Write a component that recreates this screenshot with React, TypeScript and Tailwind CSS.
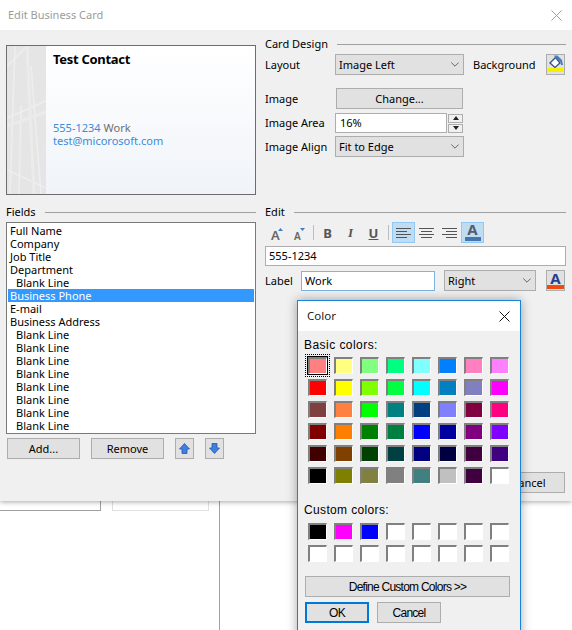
import React from "react";

const basic = [
  ["#ff8080", "#ffff80", "#80ff80", "#00ff80", "#80ffff", "#0080ff", "#ff80c0", "#ff80ff"],
  ["#ff0000", "#ffff00", "#80ff00", "#00ff40", "#00ffff", "#0080c0", "#8080c0", "#ff00ff"],
  ["#804040", "#ff8040", "#00ff00", "#008080", "#004080", "#8080ff", "#800040", "#ff0080"],
  ["#800000", "#ff8000", "#008000", "#008040", "#0000ff", "#0000a0", "#800080", "#8000ff"],
  ["#400000", "#804000", "#004000", "#004040", "#000080", "#000040", "#400040", "#400080"],
  ["#000000", "#808000", "#808040", "#808080", "#408080", "#c0c0c0", "#400040", "#ffffff"],
];
const custom = [
  ["#000000", "#ff00ff", "#0000ff", "#ffffff", "#ffffff", "#ffffff", "#ffffff", "#ffffff"],
  ["#ffffff", "#ffffff", "#ffffff", "#ffffff", "#ffffff", "#ffffff", "#ffffff", "#ffffff"],
];
const fields: [string, boolean?, boolean?][] = [
  ["Full Name"], ["Company"], ["Job Title"], ["Department"], ["Blank Line", true],
  ["Business Phone", false, true], ["E-mail"], ["Business Address"],
  ["Blank Line", true], ["Blank Line", true], ["Blank Line", true], ["Blank Line", true],
  ["Blank Line", true], ["Blank Line", true], ["Blank Line", true], ["Blank Line", true],
];

function Chevron() {
  return (
    <svg width="8" height="5" viewBox="0 0 8 5" className="shrink-0">
      <path d="M0.3 0.5 L4 4.2 L7.7 0.5" fill="none" stroke="#666" strokeWidth="1" />
    </svg>
  );
}
function Select({ text, className }: { text: string; className: string }) {
  return (
    <div className={`flex h-[21px] shrink-0 items-center justify-between border border-[#adadad] bg-[#e1e1e1] pl-[3px] pr-[4px] ${className}`}>
      <span>{text}</span>
      <Chevron />
    </div>
  );
}
function Btn({ children, className }: { children: React.ReactNode; className: string }) {
  return (
    <div className={`flex h-[21px] shrink-0 items-center justify-center border border-[#adadad] bg-[#e1e1e1] ${className}`}>{children}</div>
  );
}
function Heading({ text }: { text: string }) {
  return (
    <div className="flex h-[14px] items-center gap-[9px]">
      <span>{text}</span>
      <div className="h-px flex-1 bg-[#a0a0a0]" />
    </div>
  );
}
function Swatch({ color, selected }: { color: string; selected?: boolean }) {
  return (
    <div className="relative h-[17px] w-[19px] border-t-2 border-l-2 border-r border-b border-t-[#808080] border-l-[#808080] border-r-white border-b-white" style={{ backgroundColor: color }}>
      {selected && (
        <div className="absolute -left-[5px] -top-[5px] h-[23px] w-[25px] border border-dotted border-black p-px">
          <div className="h-full w-full border border-black" />
        </div>
      )}
    </div>
  );
}
function ArrowIcon({ down }: { down?: boolean }) {
  return (
    <svg width="11" height="11" viewBox="0 0 11 11">
      <path d={down ? "M3 0.5H8V5H10.5L5.5 10.5L0.5 5H3Z" : "M3 10.5H8V6H10.5L5.5 0.5L0.5 6H3Z"} fill="#3f7fe0" stroke="#2a55a8" strokeWidth="0.8" />
    </svg>
  );
}
const dlgFont = { fontFamily: '"Liberation Sans", sans-serif' };

export default function App() {
  return (
    <div className="relative h-[630px] w-[572px] overflow-hidden bg-white text-[11px] leading-[14px] text-black" style={{ fontFamily: '"Noto Sans", "Open Sans", sans-serif' }}>
      <div className="relative z-10 h-[501px] bg-[#f0f0f0] shadow-[0_1px_5px_rgba(0,0,0,0.35)]">
        <div className="flex h-[30px] items-center justify-between bg-white pl-2 pr-[10px] text-[#9b9b9b]">
          <span>Edit Business Card</span>
          <svg width="11" height="11" viewBox="0 0 11 11">
            <path d="M0.5 0.5L10.5 10.5M10.5 0.5L0.5 10.5" stroke="#a0a0a0" strokeWidth="1" fill="none" />
          </svg>
        </div>
        <div className="grid grid-cols-[250px_301px] gap-x-[9px] pl-[6px] pt-[15px]">
          <div className="relative flex h-[150px] overflow-hidden border border-[#6d6d6d] bg-gradient-to-b from-white to-[#f0f4f9] pl-[39px]">
            <svg className="absolute left-0 top-0 h-full w-[39px]" viewBox="0 0 39 148" preserveAspectRatio="none">
              <rect width="39" height="148" fill="#e5e5e5" />
              <path d="M0 72L39 55M0 124L39 142M8 0L3 148M24 20L34 148M0 20L20 0M14 60L12 148" stroke="#eeeeee" strokeWidth="1.5" fill="none" />
              <path d="M0 80L39 66M20 0L27 148" stroke="#ebebeb" strokeWidth="3" fill="none" />
            </svg>
            <div className="flex flex-col pl-[7px] pt-[6px]">
              <div className="text-[13px] font-bold leading-[15px] tracking-[-0.3px]">Test Contact</div>
              <div className="mt-[54px] flex gap-[3px] leading-[13px]">
                <span className="text-[#3a8bdb]">555-1234</span>
                <span className="text-[#6e6e6e]">Work</span>
              </div>
              <div className="leading-[13px] text-[#3a8bdb]">test@micorosoft.com</div>
            </div>
          </div>

          <div className="-mt-[8px]">
            <Heading text="Card Design" />
            <div className="mt-[3px] flex items-center">
              <span className="w-[70px] shrink-0">Layout</span>
              <Select text="Image Left" className="w-[129px]" />
              <span className="ml-[9px] w-[73px] shrink-0">Background</span>
              <div className="flex h-[21px] w-[19px] shrink-0 flex-col items-center border border-[#adadad] bg-[#e1e1e1]">
                <svg width="17" height="18" viewBox="0 0 17 18">
                  <path d="M3 8L8.5 2.5L13 8L8 12.5Z" fill="#fff" stroke="#2c4f8f" strokeWidth="1.3" />
                  <path d="M8 2.5L7 0.5H10.5L15 5L16 10H14L13.5 7Z" fill="#4a7cc4" />
                  <rect x="0.5" y="13" width="16" height="4" fill="#f5ef00" />
                </svg>
              </div>
            </div>
            <div className="mt-[13px] flex items-center">
              <span className="w-[71px] shrink-0">Image</span>
              <Btn className="w-[127px]">Change...</Btn>
            </div>
            <div className="mt-[4px] flex items-center">
              <span className="w-[70px] shrink-0">Image Area</span>
              <div className="flex h-5 w-[112px] items-center border border-[#adadad] bg-white pl-[4px]">16%</div>
              <div className="ml-px flex flex-col gap-px">
                <div className="flex h-[9px] w-[15px] items-center justify-center border border-[#adadad] bg-[#f0f0f0]">
                  <svg width="6" height="4" viewBox="0 0 6 4"><path d="M3 0L6 4H0Z" fill="#222" /></svg>
                </div>
                <div className="flex h-[9px] w-[15px] items-center justify-center border border-[#adadad] bg-[#f0f0f0]">
                  <svg width="6" height="4" viewBox="0 0 6 4"><path d="M0 0H6L3 4Z" fill="#222" /></svg>
                </div>
              </div>
            </div>
            <div className="mt-[3px] flex items-center">
              <span className="w-[70px] shrink-0">Image Align</span>
              <Select text="Fit to Edge" className="w-[129px]" />
            </div>
          </div>

          <div className="mt-[10px]">
            <Heading text="Fields" />
            <div className="mt-[3px] h-[212px] overflow-hidden border border-[#7a7a7a] bg-white px-px pt-px">
              {fields.map(([t, indent, sel], i) => (
                <div key={i} className={`h-[13px] leading-[13px] ${indent ? "pl-[8px]" : "pl-[2px]"} ${sel ? "bg-[#3399ff] text-white" : ""}`}>{t}</div>
              ))}
            </div>
            <div className="mt-[4px] flex pl-px">
              <Btn className="w-[73px]">Add...</Btn>
              <Btn className="ml-[11px] w-[73px]">Remove</Btn>
              <Btn className="ml-[11px] w-[19px]"><ArrowIcon /></Btn>
              <Btn className="ml-[11px] w-[19px]"><ArrowIcon down /></Btn>
            </div>
          </div>

          <div className="mt-[10px]">
            <Heading text="Edit" />
            <div className="mt-[3px] flex h-[21px] items-center">
              <div className="flex w-[23px] justify-center">
                <svg width="16" height="16" viewBox="0 0 16 16" className="overflow-visible">
                  <text x="2" y="15" fontSize="13" fontWeight="600" fill="#666">A</text>
                  <path d="M9 6L11.5 3L14 6Z" fill="#3f7fc0" />
                </svg>
              </div>
              <div className="flex w-[23px] justify-center">
                <svg width="14" height="16" viewBox="0 0 14 16" className="overflow-visible">
                  <text x="1" y="15" fontSize="10" fontWeight="600" fill="#666">A</text>
                  <path d="M7 3H12L9.5 6Z" fill="#3f7fc0" />
                </svg>
              </div>
              <div className="ml-[2px] mr-[2px] h-[15px] w-px bg-[#bdbdbd]" />
              <div className="flex w-[23px] justify-center text-[13px] font-bold text-[#555]">B</div>
              <div className="flex w-[23px] justify-center text-[13px] font-bold italic text-[#555]" style={{ fontFamily: '"Liberation Serif", serif' }}>I</div>
              <div className="flex w-[23px] justify-center text-[13px] font-bold text-[#555] underline">U</div>
              <div className="mx-[3px] h-[15px] w-px bg-[#bdbdbd]" />
              <div className="flex h-[21px] w-[23px] items-center justify-center border border-[#90c8f6] bg-[#bfdcf3]">
                <svg width="15" height="12" viewBox="0 0 15 12"><path d="M0 1.5H15M0 4.5H11M0 7.5H15M0 10.5H11" stroke="#555" /></svg>
              </div>
              <div className="flex w-[23px] justify-center"><svg width="15" height="12" viewBox="0 0 15 12"><path d="M0 1.5H15M2 4.5H13M0 7.5H15M2 10.5H13" stroke="#555" /></svg></div>
              <div className="flex w-[23px] justify-center"><svg width="15" height="12" viewBox="0 0 15 12"><path d="M0 1.5H15M4 4.5H15M0 7.5H15M4 10.5H15" stroke="#555" /></svg></div>
              <div className="flex h-[21px] w-[23px] flex-col items-center justify-end border border-[#90c8f6] bg-[#bfdcf3] pb-[1px]">
                <span className="text-[15px] font-bold leading-[13px] text-[#555d6e]">A</span>
                <div className="mt-[1px] h-[4px] w-[16px] bg-[#4277ad]" />
              </div>
            </div>
            <div className="mt-[3px] flex h-5 items-center border border-[#adadad] bg-white pl-[3px]">555-1234</div>
            <div className="mt-[4px] flex items-center">
              <span className="w-[36px] shrink-0">Label</span>
              <div className="flex h-5 w-[134px] items-center border border-[#7fb4e0] bg-white pl-[3px]">Work</div>
              <Select text="Right" className="ml-[9px] w-[92px]" />
              <div className="ml-[10px] flex h-[21px] w-[19px] flex-col items-center justify-end border border-[#adadad] bg-[#e1e1e1] pb-[1px]">
                <span className="text-[15px] font-bold leading-[13px] text-[#27408b]">A</span>
                <div className="h-[4px] w-[17px] bg-[#f04a0c]" />
              </div>
            </div>
          </div>
        </div>
        <div className="absolute bottom-[8px] right-[7px] flex h-[21px] w-[73px] items-center justify-center border border-[#adadad] bg-[#e1e1e1]">Cancel</div>
      </div>

      <div className="flex h-[129px]">
        <div className="h-[10px] w-[101px] border-r border-b border-[#a0a0a0]" />
        <div className="ml-[11px] h-[10px] w-[97px] border-x border-b border-[#e0e0e0]" />
        <div className="ml-[10px] w-px bg-[#a0a0a0]" />
      </div>

      <div className="absolute left-[297px] top-[300px] z-20 h-[340px] w-[224px] border border-[#1883d7] bg-[#f0f0f0] shadow-[0_0_10px_rgba(0,0,0,0.35)]">
        <div className="flex h-[30px] items-center justify-between bg-white pl-[9px] pr-[10px] text-[11.5px] text-[#222]">
          <span>Color</span>
          <svg width="11" height="11" viewBox="0 0 11 11">
            <path d="M0.5 0.5L10.5 10.5M10.5 0.5L0.5 10.5" stroke="#111" strokeWidth="1" fill="none" />
          </svg>
        </div>
        <div className="pl-[6px] pt-[7px] text-[12px]" style={dlgFont}>
          <div className="h-[14px] leading-[14px] tracking-[0.45px]">Basic colors:</div>
          <div className="ml-[4px] mt-[5px] grid grid-cols-[repeat(8,19px)] gap-x-[7px] gap-y-[5px]">
            {basic.flat().map((c, i) => <Swatch key={i} color={c} selected={i === 0} />)}
          </div>
          <div className="mt-[19px] h-[14px] leading-[14px] tracking-[0.35px]">Custom colors:</div>
          <div className="ml-[4px] mt-[6px] grid grid-cols-[repeat(8,19px)] gap-x-[7px] gap-y-[5px]">
            {custom.flat().map((c, i) => <Swatch key={i} color={c} />)}
          </div>
          <div className="ml-px mt-[14px] flex h-[21px] w-[205px] items-center justify-center border border-[#adadad] bg-[#e1e1e1] tracking-[-0.75px]">Define Custom Colors &gt;&gt;</div>
          <div className="ml-px mt-[5px] flex gap-2 tracking-[-0.75px]">
            <div className="flex h-[21px] w-[64px] items-center justify-center border-2 border-[#0078d7] bg-[#e1e1e1]">OK</div>
            <div className="flex h-[21px] w-[64px] items-center justify-center border border-[#adadad] bg-[#e1e1e1]">Cancel</div>
          </div>
        </div>
      </div>
    </div>
  );
}
